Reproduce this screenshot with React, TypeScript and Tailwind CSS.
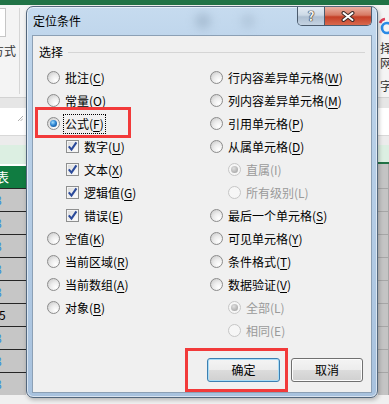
import React from "react";

function Radio({ on = false, disabled = false }: { on?: boolean; disabled?: boolean }) {
  return (
    <span
      className={
        disabled
          ? "flex h-[13px] w-[13px] shrink-0 items-center justify-center rounded-full border border-[#c6c6c6] bg-[#f6f6f6]"
          : "flex h-[13px] w-[13px] shrink-0 items-center justify-center rounded-full border border-[#8c8c8c] bg-[radial-gradient(circle_at_70%_75%,#ffffff_0%,#ececec_45%,#c4c4c4_100%)]"
      }
    >
      {on && (
        <span
          className={
            disabled
              ? "h-[7px] w-[7px] rounded-full bg-[radial-gradient(circle_at_40%_35%,#e0e0e0,#9a9a9a)]"
              : "h-[7px] w-[7px] rounded-full bg-[radial-gradient(circle_at_40%_35%,#a6e0ff_0%,#2f86d3_45%,#0b3f7e_100%)]"
          }
        />
      )}
    </span>
  );
}

function Check() {
  return (
    <span className="flex h-[13px] w-[13px] shrink-0 items-center justify-center border border-[#8e8f8f] bg-[linear-gradient(135deg,#d8d8d8,#ffffff)] shadow-[inset_0_0_0_1px_#f4f4f4]">
      <svg width="11" height="11" viewBox="0 0 11 11">
        <path d="M1.8 5.4 L4.5 8.6 L9.4 1.4" fill="none" stroke="#2b4a9a" strokeWidth="2.1" />
      </svg>
    </span>
  );
}

function Label({ t, k, disabled = false }: { t: string; k: string; disabled?: boolean }) {
  if (disabled) {
    return <span className="text-[#9a9a9a]">{t}({k})</span>;
  }
  return (
    <span>
      {t}(<span className="underline underline-offset-[2px]">{k}</span>)
    </span>
  );
}

function Row({ children, indent = "" }: { children: React.ReactNode; indent?: string }) {
  return <div className={`flex h-[23px] items-center gap-[5px] ${indent}`}>{children}</div>;
}

function Btn({ label, primary = false }: { label: string; primary?: boolean }) {
  return (
    <button
      className={
        primary
          ? "flex h-[24px] w-[73px] items-center justify-center rounded-[3px] border border-[#3c7fb1] bg-[linear-gradient(180deg,#f4f4f4_0%,#ececec_50%,#dcdcdc_50%,#d0d0d0_100%)] text-[12px] leading-[16px] text-black shadow-[inset_0_0_0_1px_#a9dcf6]"
          : "flex h-[24px] w-[72px] items-center justify-center rounded-[3px] border border-[#707070] bg-[linear-gradient(180deg,#f4f4f4_0%,#ececec_50%,#dcdcdc_50%,#d0d0d0_100%)] text-[12px] leading-[16px] text-black shadow-[inset_0_0_0_1px_#fcfcfc]"
      }
    >
      {label}
    </button>
  );
}

export default function App() {
  const cells = [0, 1, 2, 3, 4, 5, 6, 7, 8];
  return (
    <div className="relative h-[404px] w-[389px] overflow-hidden bg-[#f0f0f0] [font-family:'Noto_Sans_CJK_SC','Noto_Sans',sans-serif] text-black">
      {/* excel behind the dialog */}
      <div className="flex flex-col">
        <div className="h-[5px] bg-[#217346]" />
        <div className="flex h-[92px] bg-[#f4f4f4]">
          <div className="flex w-[26px]">
            <div className="my-[3px] flex w-[20px] flex-col border-r border-[#d6d6d6]">
              <div className="h-[29px] w-[6px] border border-l-0 border-[#c6c6c6] bg-white" />
              <div className="mt-[6px] flex justify-end overflow-hidden whitespace-nowrap pr-[3px] text-[12px] leading-[16px] text-[#333]">
                方式
              </div>
            </div>
          </div>
          <div className="flex-1" />
          <div className="flex w-[11px] flex-col overflow-hidden whitespace-nowrap text-[12px] leading-[14px] text-[#333]">
            <svg width="11" height="32" viewBox="0 0 11 32" className="shrink-0">
              <circle cx="9" cy="23" r="5" fill="none" stroke="#2b8be6" strokeWidth="2.6" />
              <path d="M2 18 A6 6 0 0 1 7 14" fill="none" stroke="#e0405a" strokeWidth="2.6" />
            </svg>
            <div className="ml-[2px] mt-[4px]">择</div>
            <div className="ml-[2px] mt-[1px]">网</div>
            <div className="ml-[2px] mt-[9px]">字</div>
          </div>
        </div>
        <div className="h-[11px] border-t border-[#d2d2d2] bg-[#e6e6e6]" />
        <div className="flex h-[27px] bg-white">
          <div className="flex w-[26px] items-start justify-end pr-[3px] pt-[8px]">
            <svg width="5" height="5" viewBox="0 0 5 5">
              <path d="M0 5 L5 0 M2.5 5 L5 2.5" stroke="#b0b0b0" strokeWidth="1" />
            </svg>
          </div>
        </div>
        <div className="h-[10px] border-t border-[#d8d8d8] bg-[#ececec]" />
        <div className="flex h-[19px] bg-[#dcefe2]">
          <div className="flex-1" />
          <div className="w-[11px] border-b-2 border-[#217346]" />
        </div>
        <div className="flex h-[24px]">
          <div className="flex w-[26px] items-center overflow-hidden border-t-2 border-white bg-[#107c41] text-[13px] leading-[16px] text-white">
            <span className="-ml-[4px]">表</span>
          </div>
          <div className="flex-1" />
          <div className="w-[11px] border-r border-[#a8a8a8] bg-[#c4c4c4]" />
        </div>
        {cells.map((i) => (
          <div key={i} className="flex h-[23px]">
            <div className="flex w-[26px] items-center overflow-hidden border-t border-[#262626] bg-[#c6c6c6] text-[12px] leading-[16px]">
              {i === 5 ? (
                <span className="-ml-[1px] text-black">5</span>
              ) : (
                <span className="-ml-[5px] text-[#2f8fe0]">8</span>
              )}
            </div>
            <div className="flex-1" />
            <div className="w-[11px] border-t border-r border-[#a6a6a6] bg-[#c4c4c4]" />
          </div>
        ))}
      </div>

      {/* dialog window */}
      <div className="absolute left-[26px] top-[6px] flex h-[392px] w-[352px] flex-col rounded-[7px] border border-[#53677c] bg-[linear-gradient(180deg,#c6dbef_0%,#bcd3ea_12%,#b4cce5_55%,#a8c2de_100%)] shadow-[inset_0_0_0_1px_rgba(255,255,255,0.55),1px_2px_4px_rgba(0,0,0,0.25)]">
        <div className="relative flex h-[28px] items-center pl-[6px]">
          <span className="absolute left-[168px] top-[6px] h-[16px] w-[16px] rounded-full bg-[#8ea4ba] opacity-50 blur-[5px]" />
          <span className="absolute left-[214px] top-[7px] h-[14px] w-[14px] rounded-full bg-[#9fb4c9] opacity-50 blur-[5px]" />
          <span className="relative text-[12px] leading-[16px] text-black">定位条件</span>
          <div className="absolute right-[5px] top-0 flex h-[19px] overflow-hidden rounded-b-[5px] border border-t-0 border-[#4b5b6d]">
            <div className="flex w-[26px] items-center justify-center bg-[linear-gradient(180deg,#e4ecf4_0%,#ccd9e6_45%,#aebfd1_55%,#c4d3e2_100%)] text-[13px] font-bold leading-[14px] text-[#f2f2f2] [text-shadow:0_0_1px_#222,0_0_1px_#222,0_0_1px_#222]">
              ?
            </div>
            <div className="flex w-[47px] items-center justify-center border-l border-[#4b5b6d] bg-[linear-gradient(180deg,#eab1a2_0%,#d77a64_45%,#c43f26_55%,#d9694d_100%)]">
              <svg width="14" height="11" viewBox="0 0 14 11">
                <path d="M2.5 2 L11.5 9 M11.5 2 L2.5 9" stroke="#3a2a28" strokeWidth="4" strokeLinecap="round" />
                <path d="M2.5 2 L11.5 9 M11.5 2 L2.5 9" stroke="#ffffff" strokeWidth="2" strokeLinecap="round" />
              </svg>
            </div>
          </div>
        </div>

        <div className="mx-[5px] mb-[4px] flex flex-1 flex-col border border-[#8ca0b5] bg-[#f0f0f0] text-[12px] leading-[16px]">
          <div className="mt-[8px] flex h-[16px] items-center px-[6px]">
            <span>选择</span>
            <span className="ml-[5px] h-px flex-1 bg-[#d5d5d5]" />
          </div>

          <div className="mt-[6px] flex pl-[14px]">
            <div className="flex w-[163px] flex-col">
              <Row><Radio /><Label t="批注" k="C" /></Row>
              <Row><Radio /><Label t="常量" k="O" /></Row>
              <Row>
                <Radio on />
                <span className="-ml-[2px] border border-dotted border-black px-[1px] py-[1px]">
                  <Label t="公式" k="F" />
                </span>
              </Row>
              <Row indent="pl-[19px] gap-[4px]"><Check /><Label t="数字" k="U" /></Row>
              <Row indent="pl-[19px] gap-[4px]"><Check /><Label t="文本" k="X" /></Row>
              <Row indent="pl-[19px] gap-[4px]"><Check /><Label t="逻辑值" k="G" /></Row>
              <Row indent="pl-[19px] gap-[4px]"><Check /><Label t="错误" k="E" /></Row>
              <Row><Radio /><Label t="空值" k="K" /></Row>
              <Row><Radio /><Label t="当前区域" k="R" /></Row>
              <Row><Radio /><Label t="当前数组" k="A" /></Row>
              <Row><Radio /><Label t="对象" k="B" /></Row>
            </div>
            <div className="flex flex-col">
              <Row><Radio /><Label t="行内容差异单元格" k="W" /></Row>
              <Row><Radio /><Label t="列内容差异单元格" k="M" /></Row>
              <Row><Radio /><Label t="引用单元格" k="P" /></Row>
              <Row><Radio /><Label t="从属单元格" k="D" /></Row>
              <Row indent="pl-[18px]"><Radio on disabled /><Label t="直属" k="I" disabled /></Row>
              <Row indent="pl-[18px]"><Radio disabled /><Label t="所有级别" k="L" disabled /></Row>
              <Row><Radio /><Label t="最后一个单元格" k="S" /></Row>
              <Row><Radio /><Label t="可见单元格" k="Y" /></Row>
              <Row><Radio /><Label t="条件格式" k="T" /></Row>
              <Row><Radio /><Label t="数据验证" k="V" /></Row>
              <Row indent="pl-[18px]"><Radio on disabled /><Label t="全部" k="L" disabled /></Row>
              <Row indent="pl-[18px]"><Radio disabled /><Label t="相同" k="E" disabled /></Row>
            </div>
          </div>

          <div className="mt-auto flex justify-end gap-[11px] pb-[10px] pr-[8px]">
            <Btn label="确定" primary />
            <Btn label="取消" />
          </div>
        </div>
      </div>

      {/* red annotation boxes */}
      <div className="absolute left-[35px] top-[107px] h-[31px] w-[96px] border-[3px] border-[#f23a3a]" />
      <div className="absolute left-[185px] top-[348px] h-[44px] w-[103px] border-[3px] border-[#f23a3a]" />
    </div>
  );
}
